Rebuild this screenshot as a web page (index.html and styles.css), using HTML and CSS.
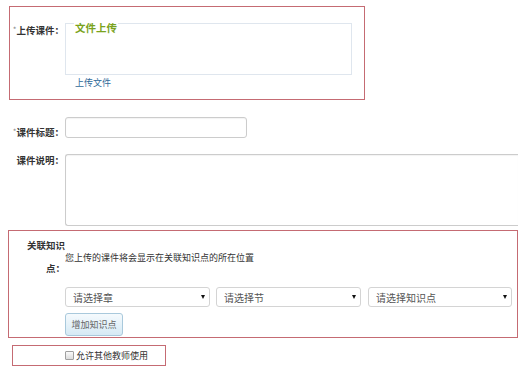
FILE: index.html
```html
<!DOCTYPE html>
<html lang="zh-CN">
<head>
  <meta charset="UTF-8">
  <meta name="viewport" content="width=device-width, initial-scale=1.0">
  <title>上传课件</title>
  <link rel="stylesheet" href="styles.css">
</head>
<body>
  <form class="course-form">
    <div class="box box-upload">
      <div class="field">
        <label class="field-label"><span class="req">*</span>上传课件：</label>
        <div class="field-body">
          <div class="upload-area"><span class="upload-title">文件上传</span></div>
          <a class="upload-link" href="#">上传文件</a>
        </div>
      </div>
    </div>

    <div class="field field-title">
      <label class="field-label label-title" for="course-title"><span class="req">*</span>课件标题：</label>
      <div class="field-body">
        <input class="text-input" id="course-title" type="text">
      </div>
    </div>

    <div class="field field-desc">
      <label class="field-label label-desc" for="course-desc">课件说明：</label>
      <div class="field-body">
        <textarea class="text-area" id="course-desc"></textarea>
      </div>
    </div>

    <div class="box box-knowledge">
      <div class="field">
        <label class="field-label label-wrap">关联知识点：</label>
        <div class="field-body knowledge-body">
          <p class="hint">您上传的课件将会显示在关联知识点的所在位置</p>
          <div class="selects">
            <span class="select-wrap">
              <select class="select"><option>请选择章</option></select>
            </span>
            <span class="select-wrap">
              <select class="select"><option>请选择节</option></select>
            </span>
            <span class="select-wrap last">
              <select class="select"><option>请选择知识点</option></select>
            </span>
          </div>
          <button class="add-btn" type="button">增加知识点</button>
        </div>
      </div>
    </div>

    <div class="box box-share">
      <label class="check-label"><input class="check" type="checkbox">允许其他教师使用</label>
    </div>
  </form>
</body>
</html>
```

FILE: styles.css
```css
body {
  margin: 0;
  font-family: "Noto Sans CJK SC", "Liberation Sans", sans-serif;
  font-size: 9px;
  color: #333;
  background-color: #fff;
  overflow: hidden;
}

.course-form {
  width: 518px;
}

.box {
  box-sizing: border-box;
  border: 1px solid #c56b73;
}

.field {
  display: flex;
}

.field-label {
  flex: none;
  width: 54px;
  padding-right: 1px;
  text-align: right;
  font-size: 9.5px;
  font-weight: bold;
  line-height: 14px;
  color: #333;
}

.req {
  font-size: 8px;
  font-weight: normal;
  color: #888;
  vertical-align: top;
}

.field-body {
  flex: none;
}

/* upload */
.box-upload {
  width: 356px;
  margin: 6px 0 0 9px;
  padding: 16px 0 9px 0;
}

.upload-area {
  box-sizing: border-box;
  width: 287px;
  height: 52px;
  border: 1px solid #dfe6ee;
}

.upload-title {
  position: relative;
  top: -3px;
  display: inline-block;
  margin-left: 8px;
  padding: 0 1px;
  background-color: #fff;
  font-size: 10.5px;
  font-weight: bold;
  line-height: 14px;
  color: #7aa31c;
}

.upload-link {
  display: block;
  margin: 1px 0 0 10px;
  font-size: 9px;
  line-height: 14px;
  color: #2f6a99;
  text-decoration: none;
}

/* title & description */
.field-title {
  margin: 17px 0 0 10px;
}

.label-title {
  padding-top: 8px;
}

.text-input {
  box-sizing: border-box;
  width: 182px;
  height: 21px;
  margin: 0;
  border: 1px solid #ccc;
  border-radius: 3px;
  box-shadow: inset 0 1px 1px rgba(0, 0, 0, 0.05);
}

.field-desc {
  margin: 15px 0 0 10px;
}

.label-desc {
  line-height: 13px;
}

.text-area {
  display: block;
  box-sizing: border-box;
  width: 453px;
  height: 72px;
  margin: 0;
  border: 1px solid #ccc;
  border-right: 0;
  border-radius: 3px 0 0 3px;
  resize: none;
  box-shadow: inset 0 1px 1px rgba(0, 0, 0, 0.05);
}

/* knowledge points */
.box-knowledge {
  width: 510px;
  margin: 4px 0 0 8px;
  padding: 0 0 1px 0;
}

.label-wrap {
  width: 39px;
  margin-left: 17px;
  padding: 3px 0 0 0;
  line-height: 23px;
}

.knowledge-body {
  padding-top: 20px;
}

.hint {
  margin: 0;
  font-size: 9px;
  line-height: 14px;
  color: #333;
}

.selects {
  display: flex;
  margin-top: 22px;
}

.select-wrap {
  position: relative;
  display: block;
  width: 145px;
  margin-right: 6px;
}

.select-wrap.last {
  width: 144px;
  margin-left: 1px;
  margin-right: 0;
}

.select-wrap::after {
  content: "";
  position: absolute;
  right: 5px;
  top: 8px;
  border-left: 2.5px solid transparent;
  border-right: 2.5px solid transparent;
  border-top: 4px solid #111;
}

.select {
  box-sizing: border-box;
  width: 100%;
  height: 20px;
  margin: 0;
  padding: 0 0 0 7px;
  border: 1px solid #d4d4d4;
  border-radius: 3px;
  background-color: #fff;
  font-family: inherit;
  font-size: 10px;
  color: #555;
  -webkit-appearance: none;
  appearance: none;
}

.add-btn {
  box-sizing: border-box;
  width: 58px;
  height: 23px;
  margin-top: 6px;
  padding: 0;
  border: 1px solid #a9c9dc;
  border-radius: 3px;
  background: linear-gradient(#f5fafd, #d6eaf5);
  font-family: inherit;
  font-size: 9px;
  color: #666;
  cursor: pointer;
}

/* share */
.box-share {
  display: flex;
  align-items: center;
  width: 154px;
  height: 21px;
  margin: 7px 0 0 12px;
  padding-left: 52px;
}

.check-label {
  display: flex;
  align-items: center;
  font-size: 9px;
  line-height: 12px;
  color: #333;
}

.check {
  box-sizing: border-box;
  width: 9px;
  height: 9px;
  margin: 0 2px 0 0;
  border: 1px solid #a0a0a0;
  border-radius: 1px;
  background: linear-gradient(#fafafa, #dcdcdc);
  -webkit-appearance: none;
  appearance: none;
}
```
